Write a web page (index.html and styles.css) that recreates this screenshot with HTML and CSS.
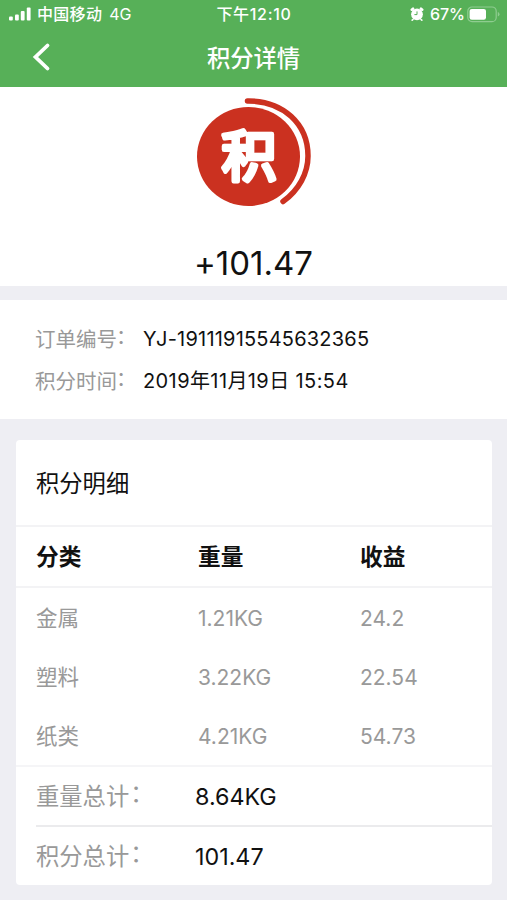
FILE: index.html
```html
<!DOCTYPE html>
<html lang="zh-CN">
<head>
<meta charset="utf-8">
<title>积分详情</title>
<link rel="stylesheet" href="styles.css">
</head>
<body>
<header class="top">
  <div class="status">
    <div class="status-left">
      <svg class="signal" width="24" height="16" viewBox="0 0 24 16" fill="#fff"><rect x="1" y="10.5" width="3.8" height="4" rx="1"/><rect x="7" y="8.5" width="3.8" height="6" rx="1"/><rect x="12.8" y="5" width="3.8" height="9.5" rx="1"/><rect x="18.8" y="1.5" width="3.8" height="13" rx="1"/></svg>
      <span class="carrier">中国移动</span><span class="network">4G</span>
    </div>
    <div class="clock">下午12:10</div>
    <div class="status-right">
      <svg class="alarm" width="14" height="14" viewBox="0 0 14 14"><g stroke="#fff" stroke-linecap="round"><path d="M1.8 2.7 3 1.7M12.2 2.7 11 1.7" stroke-width="2.6"/><path d="M3 12.5 2.2 13.2M11 12.5l.8.7" stroke-width="1.6"/></g><circle cx="7" cy="7.3" r="5.9" fill="#fff"/><path d="M7 4.4v3.2H4.4" fill="none" stroke="#57b058" stroke-width="1"/></svg>
      <span class="percent">67%</span>
      <svg class="battery" width="33" height="17" viewBox="0 0 33 17"><rect x=".8" y="1" width="28.4" height="14.6" rx="4.2" fill="none" stroke="#8fcc90" stroke-width="1.2"/><rect x="2.6" y="2.9" width="16.4" height="10.8" rx="2.2" fill="#fff"/><path d="M30.8 6v4.6q1.7-.6 1.7-2.3T30.8 6" fill="#8fcc90"/></svg>
    </div>
  </div>
  <nav class="nav">
    <svg class="back" width="22" height="32" viewBox="0 0 22 32"><path d="M17.5 4.5 5.500 16l12 11.5" fill="none" stroke="#fff" stroke-width="3.8" stroke-linecap="round" stroke-linejoin="miter"/></svg>
    <h1 class="title">积分详情</h1>
  </nav>
</header>
<section class="hero">
  <svg class="logo" width="120" height="114" viewBox="0 0 120 114">
    <ellipse cx="55.5" cy="60.5" rx="51.5" ry="49.5" fill="#cb3120"/>
    <path d="M54.500 5C90 4.500 115 28 115 60C115 77 106 94 90 105.500" fill="none" stroke="#cb3120" stroke-width="5.5" stroke-linecap="round"/>
    <text class="logo-text" x="56" y="80">积</text>
  </svg>
  <div class="amount">+101.47</div>
</section>
<section class="info">
  <div class="info-row"><span class="label">订单编号<span class="colon">：</span></span><span class="value order">YJ-19111915545632365</span></div>
  <div class="info-row"><span class="label">积分时间<span class="colon">：</span></span><span class="value time">2019年11月19日 15:54</span></div>
</section>
<section class="card">
  <h2 class="card-title">积分明细</h2>
  <div class="row head"><span>分类</span><span>重量</span><span>收益</span></div>
  <div class="rows">
    <div class="row"><span>金属</span><span class="num">1.21KG</span><span class="num">24.2</span></div>
    <div class="row"><span>塑料</span><span class="num">3.22KG</span><span class="num">22.54</span></div>
    <div class="row"><span>纸类</span><span class="num">4.21KG</span><span class="num">54.73</span></div>
  </div>
  <div class="total"><span class="total-label">重量总计<span class="colon wide">：</span></span><span class="total-value">8.64KG</span></div>
  <div class="total last"><span class="total-label">积分总计<span class="colon wide">：</span></span><span class="total-value">101.47</span></div>
</section>
</body>
</html>
```
FILE: styles.css
```css
* { box-sizing: border-box; }
body {
  margin: 0;
  height: 900px;
  overflow: hidden;
  background: #eeeef3;
  color: #111;
  font-family: Inter, "Noto Sans CJK SC", sans-serif;
  white-space: nowrap;
}
svg { display: block; flex: none; }
.top { height: 87px; background: #57b058; color: #fff; }
.status {
  display: grid;
  grid-template-columns: 1fr auto 1fr;
  align-items: center;
  height: 28px;
  padding: 0 7px 0 8px;
  font-size: 16px;
  line-height: 28px;
}
.status-left, .status-right { display: flex; align-items: center; }
.status-right { justify-content: flex-end; }
.carrier { margin-left: 5px; font-weight: 500; letter-spacing: .3px; }
.network { margin-left: 7px; }
.clock { font-weight: 500; letter-spacing: .7px; }
.percent { margin: 0 2px 0 6px; font-weight: 500; }
.nav {
  display: grid;
  grid-template-columns: 1fr auto 1fr;
  align-items: center;
  height: 59px;
  padding-left: 30px;
  padding-right: 30px;
}
.back { margin-bottom: 3px; }
.title { margin: 0; font-size: 23.3px; font-weight: 500; line-height: 61px; }
.hero {
  display: flex;
  flex-direction: column;
  align-items: center;
  height: 199px;
  padding-top: 9px;
  background: #fff;
}
.logo { margin-right: 1px; }
.logo-text {
  font: 400 55px "Noto Sans CJK SC", sans-serif;
  text-anchor: middle;
  fill: #fff;
  stroke: #fff;
  stroke-width: 4.5px;
  stroke-linecap: round;
  stroke-linejoin: round;
}
.amount { margin-top: 33px; font-size: 33px; line-height: 40px; font-feature-settings: "calt" 0; }
.info { height: 119px; margin-top: 14px; padding: 18px 35px; background: #fff; }
.info-row { display: flex; height: 42px; line-height: 43px; }
.label { width: 108px; color: #999; font-size: 20.5px; }
.colon { margin-left: -1px; line-height: 0; vertical-align: 3px; }
.wide { margin-left: 1px; }
.value { font-size: 20px; }
.order { letter-spacing: .2px; }
.time { letter-spacing: .4px; }
.card {
  height: 445px;
  margin: 21px 15px 0 16px;
  border-radius: 4px;
  background: #fff;
}
.card-title {
  height: 87px;
  margin: 0;
  padding-left: 20px;
  border-bottom: 2px solid #f3f3f5;
  font-size: 23.3px;
  font-weight: 400;
  line-height: 88px;
}
.row {
  display: grid;
  grid-template-columns: 162px 162px 1fr;
  height: 59px;
  padding-left: 20px;
  line-height: 59px;
  color: #999;
  font-size: 21.5px;
}
.num { font-size: 21px; }
.head {
  height: 61px;
  border-bottom: 2px solid #f3f3f5;
  color: #111;
  font-size: 22.7px;
  font-weight: 700;
  line-height: 60px;
}
.rows { height: 179px; padding-top: 1px; border-bottom: 2px solid #f5f5f7; }
.total {
  display: grid;
  grid-template-columns: 159px 1fr;
  height: 60px;
  margin-left: 20px;
  border-bottom: 2px solid #ebebed;
  line-height: 59px;
}
.last { border: 0; height: 58px; }
.total-label { color: #999; font-size: 23.3px; }
.total-value { color: #111; font-size: 23.3px; }
```
